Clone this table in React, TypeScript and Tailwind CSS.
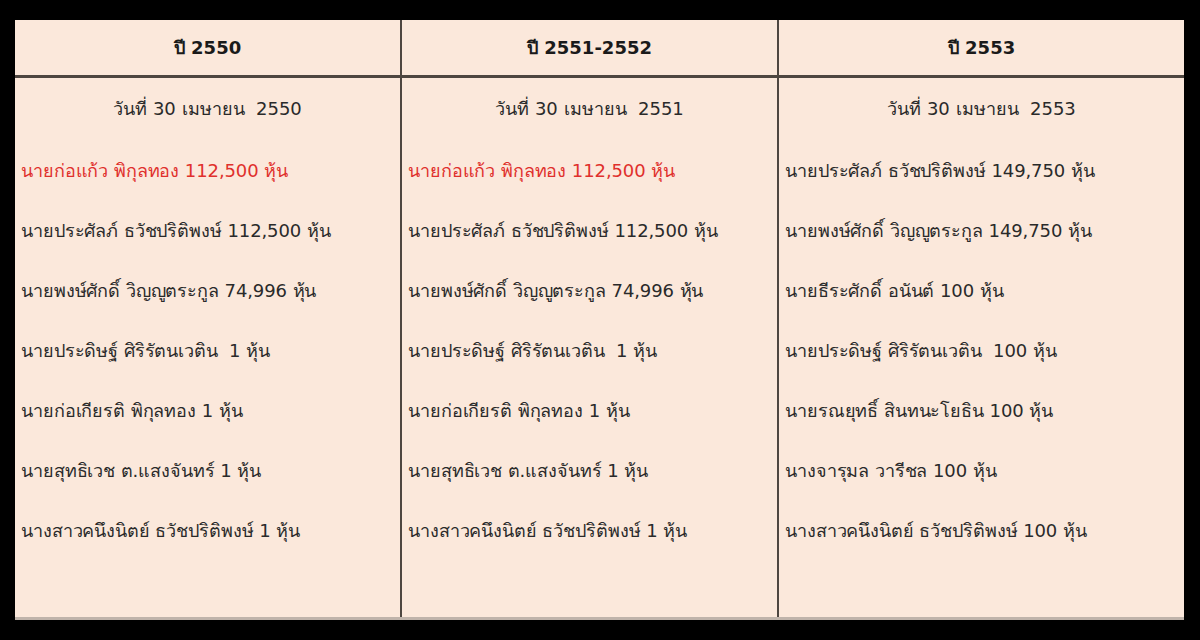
const columns = [
  {
    year: "ปี 2550",
    date: "วันที่ 30 เมษายน  2550",
    rows: [
      { text: "นายก่อแก้ว พิกุลทอง 112,500 หุ้น", red: true },
      { text: "นายประศัลภ์ ธวัชปริติพงษ์ 112,500 หุ้น" },
      { text: "นายพงษ์ศักดิ์ วิญญูตระกูล 74,996 หุ้น" },
      { text: "นายประดิษฐ์ ศิริรัตนเวติน  1 หุ้น" },
      { text: "นายก่อเกียรติ พิกุลทอง 1 หุ้น" },
      { text: "นายสุทธิเวช ต.แสงจันทร์ 1 หุ้น" },
      { text: "นางสาวคนึงนิตย์ ธวัชปริติพงษ์ 1 หุ้น" },
    ],
  },
  {
    year: "ปี 2551-2552",
    date: "วันที่ 30 เมษายน  2551",
    rows: [
      { text: "นายก่อแก้ว พิกุลทอง 112,500 หุ้น", red: true },
      { text: "นายประศัลภ์ ธวัชปริติพงษ์ 112,500 หุ้น" },
      { text: "นายพงษ์ศักดิ์ วิญญูตระกูล 74,996 หุ้น" },
      { text: "นายประดิษฐ์ ศิริรัตนเวติน  1 หุ้น" },
      { text: "นายก่อเกียรติ พิกุลทอง 1 หุ้น" },
      { text: "นายสุทธิเวช ต.แสงจันทร์ 1 หุ้น" },
      { text: "นางสาวคนึงนิตย์ ธวัชปริติพงษ์ 1 หุ้น" },
    ],
  },
  {
    year: "ปี 2553",
    date: "วันที่ 30 เมษายน  2553",
    rows: [
      { text: "นายประศัลภ์ ธวัชปริติพงษ์ 149,750 หุ้น" },
      { text: "นายพงษ์ศักดิ์ วิญญูตระกูล 149,750 หุ้น" },
      { text: "นายธีระศักดิ์ อนันต์ 100 หุ้น" },
      { text: "นายประดิษฐ์ ศิริรัตนเวติน  100 หุ้น" },
      { text: "นายรณยุทธิ์ สินทนะโยธิน 100 หุ้น" },
      { text: "นางจารุมล วารีชล 100 หุ้น" },
      { text: "นางสาวคนึงนิตย์ ธวัชปริติพงษ์ 100 หุ้น" },
    ],
  },
];

export default function App() {
  return (
    <div className="w-[1200px] h-[640px] bg-black pt-[20px] pl-[15px] font-['Tahoma','DejaVu_Sans','Noto_Sans',sans-serif]">
      <div className="w-[1169px] bg-[#fbe8db] border-b-[3px] border-[#bfb3aa] grid grid-cols-[385px_377px_407px]">
        {columns.map((col, i) => (
          <div
            key={col.year}
            className={`flex flex-col h-[597px] ${i > 0 ? "border-l-2 border-[#4e4640]" : ""}`}
          >
            <div className="h-[58px] flex items-center justify-center border-b-[3px] border-[#4e4640] text-[18px] font-bold text-[#1a1a1a] whitespace-pre">
              {col.year}
            </div>
            <div className="h-[62px] pb-[2px] flex items-center justify-center text-[18px] text-[#2a2a2a] whitespace-pre">
              {col.date}
            </div>
            {col.rows.map((r) => (
              <div
                key={r.text}
                className={`h-[60px] flex items-center pl-[6px] text-[18px] tracking-[-0.1px] whitespace-pre ${
                  r.red ? "text-[#e0302c]" : "text-[#2a2a2a]"
                }`}
              >
                {r.text}
              </div>
            ))}
          </div>
        ))}
      </div>
    </div>
  );
}
